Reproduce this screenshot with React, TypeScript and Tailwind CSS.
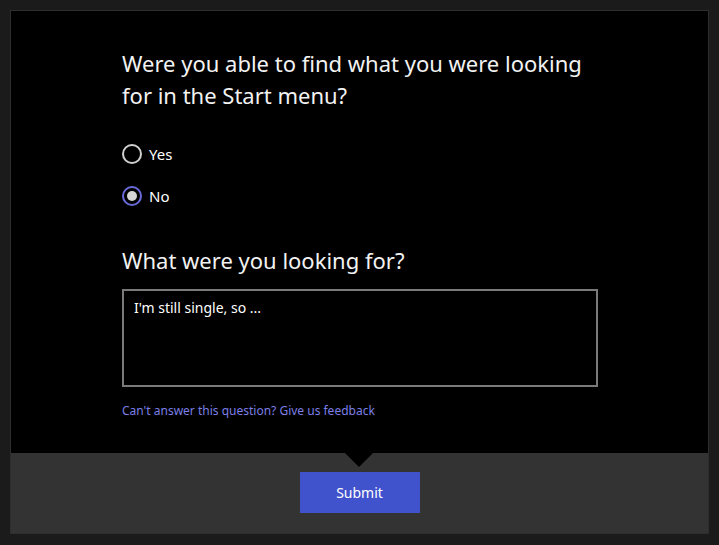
export default function App() {
  const font = { fontFamily: '"Noto Sans", "Open Sans", sans-serif' }
  return (
    <div className="w-[719px] h-[545px] bg-[#1b1b1b] p-[10px] pb-[11px]" style={font}>
      <div className="flex h-full flex-col border border-[#2e2e2e]">
        {/* question area */}
        <div className="flex-1 bg-black pl-[111px] pt-[36px]">
          <h1 className="w-[480px] text-[22px] leading-[32px] font-normal text-[#f2f2f2]">
            Were you able to find what you were looking for in the Start menu?
          </h1>

          <div className="mt-[33px] flex flex-col gap-[22px]">
            <label className="flex h-[20px] items-center gap-[7px] text-[15px] text-white">
              <span className="h-[20px] w-[20px] rounded-full border-2 border-[#d0d0d0]" />
              Yes
            </label>
            <label className="flex h-[20px] items-center gap-[7px] text-[15px] text-white">
              <span className="flex h-[20px] w-[20px] items-center justify-center rounded-full border-2 border-[#6a6ad8]">
                <span className="h-[10px] w-[10px] rounded-full bg-[#d6d6d6]" />
              </span>
              No
            </label>
          </div>

          <h2 className="mt-[38px] text-[22px] leading-[32px] font-normal text-[#f2f2f2]">
            What were you looking for?
          </h2>

          <div className="mt-[13px] h-[98px] w-[476px] border-2 border-[#7a7a7a] px-[10px] py-[6px] text-[14px] text-white">
            I'm still single, so ...
          </div>

          <a className="mt-[15px] block text-[12px] text-[#7b7fe6]">
            Can't answer this question? Give us feedback
          </a>
        </div>

        {/* footer */}
        <div className="relative flex h-[80px] justify-center bg-[#333333]">
          <div className="absolute left-[334px] top-0 h-0 w-0 border-x-[14px] border-t-[14px] border-x-transparent border-t-black" />
          <button className="mt-[19px] h-[41px] w-[120px] bg-[#4153cc] text-[14px] text-white">
            Submit
          </button>
        </div>
      </div>
    </div>
  )
}
